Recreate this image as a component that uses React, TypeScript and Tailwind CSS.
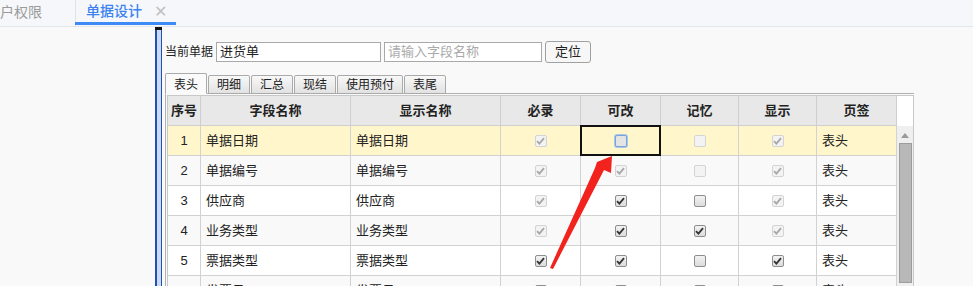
import React from 'react';

type Box = 'on' | 'off' | 'dis-on' | 'dis-off' | 'focus';

interface Row {
  no: number;
  field: string;
  label: string;
  required: Box;
  editable: Box;
  remember: Box;
  visible: Box;
  page: string;
}

const rows: Row[] = [
  { no: 1, field: '单据日期', label: '单据日期', required: 'dis-on', editable: 'focus', remember: 'dis-off', visible: 'dis-on', page: '表头' },
  { no: 2, field: '单据编号', label: '单据编号', required: 'dis-on', editable: 'dis-on', remember: 'dis-off', visible: 'dis-on', page: '表头' },
  { no: 3, field: '供应商', label: '供应商', required: 'dis-on', editable: 'on', remember: 'off', visible: 'dis-on', page: '表头' },
  { no: 4, field: '业务类型', label: '业务类型', required: 'dis-on', editable: 'on', remember: 'on', visible: 'dis-on', page: '表头' },
  { no: 5, field: '票据类型', label: '票据类型', required: 'on', editable: 'on', remember: 'off', visible: 'on', page: '表头' },
  { no: 6, field: '发票号', label: '发票号', required: 'off', editable: 'off', remember: 'off', visible: 'off', page: '表头' },
];

const tabs = ['表头', '明细', '汇总', '现结', '使用预付', '表尾'];

// маленький чекбокс в стиле старого IE
function Check({ state }: { state: Box }) {
  const disabled = state === 'dis-on' || state === 'dis-off';
  const checked = state === 'on' || state === 'dis-on';
  const focus = state === 'focus';
  return (
    <span
      className={`relative flex h-[12px] w-[12px] items-center justify-center rounded-[2px] border ${
        disabled
          ? 'border-[#d4d4d4] bg-[#f3f3f3]'
          : focus
            ? 'border-[#7aa4d8] bg-[#e4e4e4] shadow-[0_0_0_1px_#a9c6ea]'
            : 'border-[#8e8e8e] bg-gradient-to-b from-[#f2f2f2] to-[#dcdcdc]'
      }`}
    >
      {checked && (
        <svg width="9" height="8" viewBox="0 0 9 8">
          <path
            d="M1 4.2 L3.4 6.6 L8 1.2"
            fill="none"
            stroke={disabled ? '#a8a8a8' : '#333'}
            strokeWidth="1.8"
          />
        </svg>
      )}
    </span>
  );
}

export default function App() {
  return (
    <div className="relative h-[286px] w-[973px] overflow-hidden bg-[#f9f9f9] font-['Liberation_Sans','Noto_Sans_CJK_SC',sans-serif] text-[#222]">
      {/* верхняя полоса вкладок */}
      <div className="flex h-[27px] items-stretch border-b border-[#e2e5ea] bg-[#f5f7fa]">
        <div className="flex w-[75px] items-center pb-[2px] text-[14px] text-[#9a9a9a]">户权限</div>
        <div className="flex w-[101px] flex-col border-l border-[#e3e3e3]">
          <div className="flex flex-1 items-center gap-[12px] pl-[10px] pt-[1px] text-[14px] font-medium text-[#3b82f0]">
            <span>单据设计</span>
            <span className="text-[16px] font-normal leading-none text-[#c0c0c0]">✕</span>
          </div>
          <div className="ml-[-1px] h-[3px] bg-[#3d8af7]" />
          <div className="h-px" />
        </div>
      </div>

      <div className="flex">
        <div className="w-[155px]" />
        <div className="flex w-[7px] flex-col">
          <div className="h-[3px] bg-[#111]" />
          <div className="h-[260px] border-l-2 border-r border-[#1f50b4] bg-[#cbdaf1]" />
        </div>

        <div className="ml-[3px] flex flex-col">
          <div className="mt-[14px] flex h-[22px] items-center gap-[3px] text-[12px]">
            <span className="w-[48px]">当前单据</span>
            <div className="flex h-[20px] w-[165px] items-center border border-[#a9a9a9] bg-white px-[3px] text-[13px]">进货单</div>
            <div className="flex h-[20px] w-[158px] items-center border border-[#a9a9a9] bg-white px-[3px] text-[13px] text-[#aaa]">请输入字段名称</div>
            <button className="h-[22px] w-[46px] rounded-[3px] border border-[#a0a0a0] bg-[#f7f7f7] text-[13px]">定位</button>
          </div>

          {/* вкладки таблицы */}
          <div className="relative z-10 mt-[10px] -mb-px flex items-end gap-px text-[12px]">
            {tabs.map((t, i) => (
              <div
                key={t}
                className={`flex items-center justify-center rounded-t-[2px] border border-[#aaa] px-[8px] ${
                  i === 0
                    ? 'h-[21px] border-b-[#fafafa] bg-[#fafafa] pt-[2px]'
                    : 'h-[19px] bg-gradient-to-b from-[#f8f8f8] to-[#e2e2e2]'
                }`}
              >
                {t}
              </div>
            ))}
          </div>

          <div className="border-l border-t border-[#b0b0b0] pl-px pt-px">
            <div className="flex items-start border-l border-r border-t border-[#c8c8c8]">
              <div className="grid content-start grid-cols-[33px_150px_150px_80px_80px_78px_78px_80px] text-[13px]">
                {['序号', '字段名称', '显示名称', '必录', '可改', '记忆', '显示', '页签'].map((h) => (
                  <div key={h} className="flex h-[30px] items-center justify-center border-b border-r border-[#cfcfcf] bg-[#e8e8e8] font-bold">
                    {h}
                  </div>
                ))}
                {rows.map((r) => {
                  const bg = r.no === 1 ? 'bg-[#fff6cc]' : r.no % 2 === 0 ? 'bg-[#f9f9f9]' : 'bg-white';
                  const cell = `flex h-[30px] items-center border-b border-r border-[#d2d2d2] ${bg}`;
                  return (
                    <React.Fragment key={r.no}>
                      <div className={`${cell} justify-center`}>{r.no}</div>
                      <div className={`${cell} pl-[5px]`}>{r.field}</div>
                      <div className={`${cell} pl-[5px]`}>{r.label}</div>
                      <div className={`${cell} justify-center`}><Check state={r.required} /></div>
                      <div className={`${cell} relative justify-center`}>
                        <Check state={r.editable} />
                        {r.editable === 'focus' && (
                          <span className="absolute inset-[-1px] border-2 border-[#111]" />
                        )}
                      </div>
                      <div className={`${cell} justify-center`}><Check state={r.remember} /></div>
                      <div className={`${cell} justify-center`}><Check state={r.visible} /></div>
                      <div className={`${cell} pl-[5px]`}>{r.page}</div>
                    </React.Fragment>
                  );
                })}
              </div>

              {/* вертикальный скроллбар */}
              <div className="flex w-[16px] flex-col self-stretch">
                <div className="h-[30px] bg-white" />
                <div className="flex flex-1 flex-col items-center bg-[#efefef]">
                  <svg className="mt-[7px]" width="8" height="5" viewBox="0 0 8 5">
                    <path d="M0 5 L4 0 L8 5 Z" fill="#9a9a9a" />
                  </svg>
                  <div className="mt-[5px] h-[140px] w-[13px] border border-[#9c9c9c] bg-[#b8b8b8]" />
                </div>
              </div>
            </div>
          </div>
        </div>
      </div>

      {/* красная стрелка поверх */}
      <svg className="pointer-events-none absolute left-0 top-0" width="973" height="286" viewBox="0 0 973 286">
        <polygon points="612,156 611,173 604,170 553,269 550,268 595,168 597,162" fill="#f2221c" />
      </svg>
    </div>
  );
}
